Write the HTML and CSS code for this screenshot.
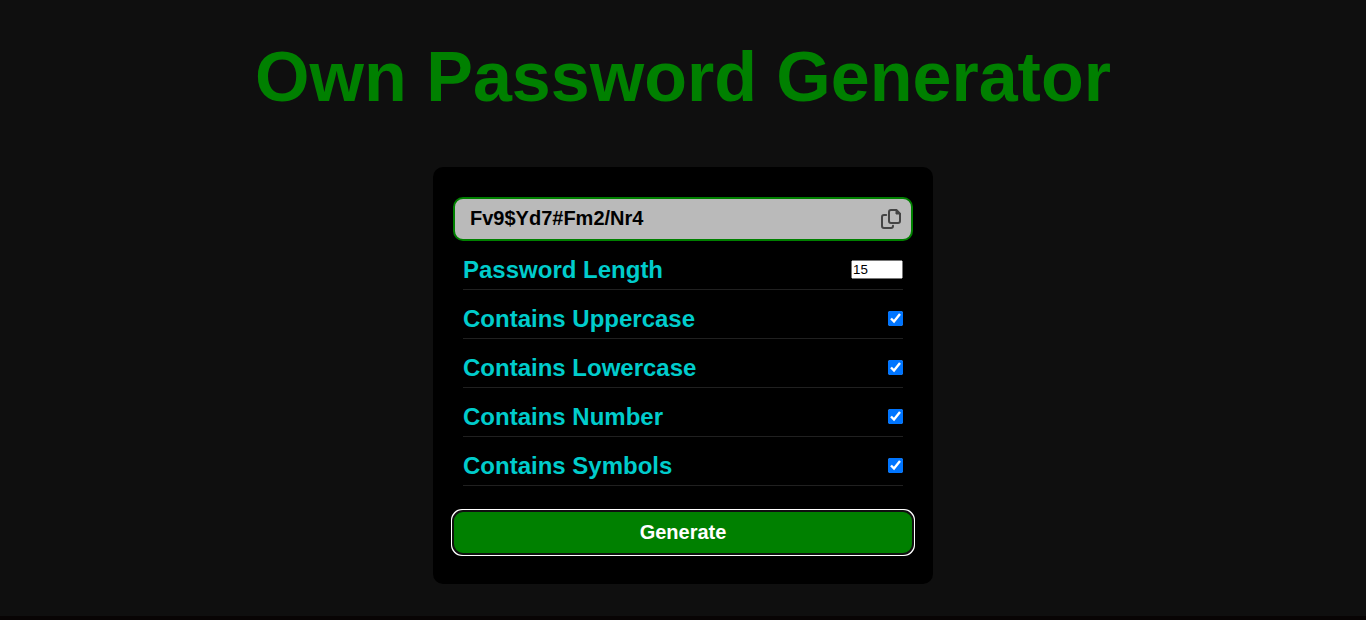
FILE: index.html
```html
<!DOCTYPE html>
<html lang="en">
<head>
<meta charset="utf-8">
<title>Own Password Generator</title>
<link rel="stylesheet" href="styles.css">
</head>
<body>
<main class="page">
  <h1 class="title">Own Password Generator</h1>
  <section class="card">
    <div class="result">
      <span>Fv9$Yd7#Fm2/Nr4</span>
      <svg class="copy" viewBox="0 0 20 20" fill="none" stroke="#444" stroke-width="2" stroke-linejoin="round" stroke-linecap="round">
        <path d="M5.2 6H3Q1 6 1 8V17Q1 19 3 19H10Q12 19 12 17V16.8"/>
        <path d="M10 1H15.4L19 4.6V12Q19 14 17 14H10Q8 14 8 12V3Q8 1 10 1Z"/>
        <path d="M15 1V5H19Z" fill="#444" stroke-width="1"/>
      </svg>
    </div>
    <div class="row"><label for="length">Password Length</label><input class="length" id="length" type="number" value="15"></div>
    <div class="row"><label for="upper">Contains Uppercase</label><input class="check" id="upper" type="checkbox" checked></div>
    <div class="row"><label for="lower">Contains Lowercase</label><input class="check" id="lower" type="checkbox" checked></div>
    <div class="row"><label for="number">Contains Number</label><input class="check" id="number" type="checkbox" checked></div>
    <div class="row"><label for="symbols">Contains Symbols</label><input class="check" id="symbols" type="checkbox" checked></div>
    <button class="generate" type="button">Generate</button>
  </section>
</main>
</body>
</html>
```
FILE: styles.css
```css
* { box-sizing: border-box; margin: 0; padding: 0; }
html { background: #080404; }
body { font-family: "Liberation Sans", Arial, sans-serif; }
.page {
  height: 616px;
  padding-top: 37px;
  display: flex;
  flex-direction: column;
  align-items: center;
  background: #0f0f0f;
}
.title { color: green; font-size: 70px; line-height: 80px; margin-bottom: 50px; }
.card {
  width: 500px;
  height: 417px;
  padding: 30px 20px;
  border-radius: 10px;
  background: #000;
}
.result {
  height: 44px;
  padding: 0 10px 0 15px;
  border: 2px solid green;
  border-radius: 10px;
  background: #bababa;
  display: flex;
  align-items: center;
  justify-content: space-between;
  font-size: 20px;
  font-weight: bold;
}
.result span { padding-bottom: 2px; }
.copy { width: 20px; height: 20px; }
.row {
  height: 49px;
  margin: 0 10px;
  padding-top: 9px;
  border-bottom: 1px solid #202020;
  display: flex;
  align-items: center;
  justify-content: space-between;
  color: #00cccc;
  font-size: 24px;
  font-weight: bold;
}
.length { width: 52px; height: 19px; font-family: inherit; font-size: 13.333px; }
.check { width: 15px; height: 15px; }
.generate {
  display: block;
  width: 460px;
  height: 43px;
  margin-top: 25px;
  border: 0;
  border-radius: 10px;
  background: green;
  color: #fff;
  font-family: inherit;
  font-size: 20px;
  font-weight: bold;
  outline: -webkit-focus-ring-color auto 1px;
}
```
